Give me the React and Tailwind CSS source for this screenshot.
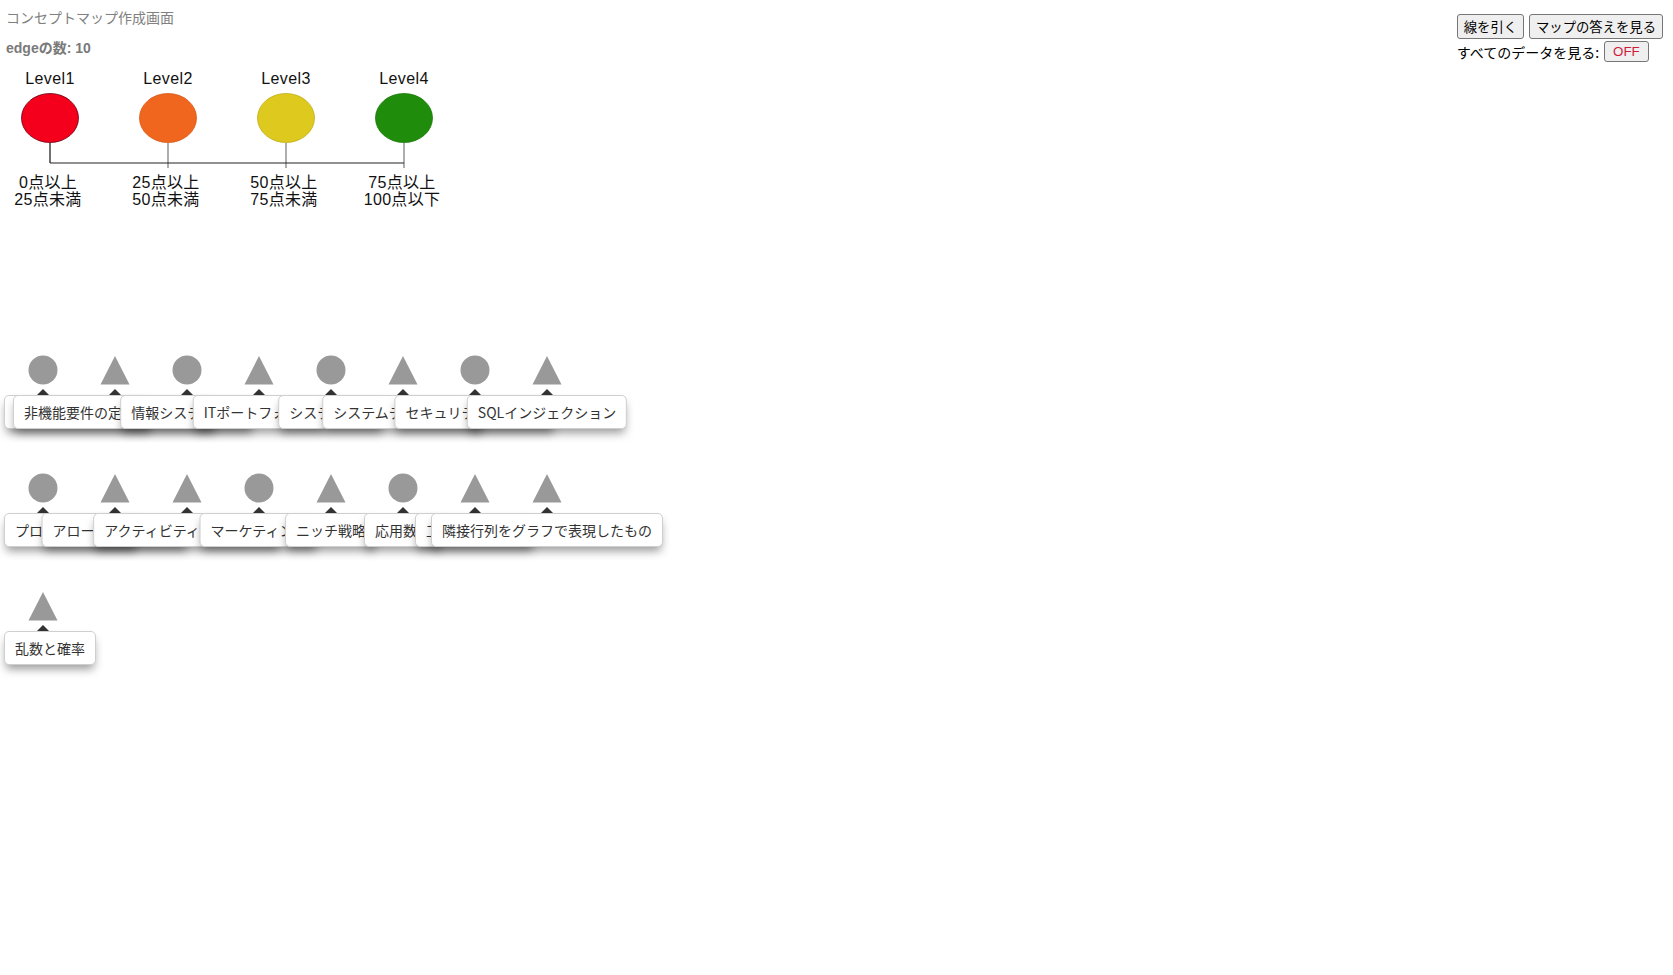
import React from 'react';

const rows = [
    [
        ['circle', 'ネットワーク構成図'],
        ['triangle', '非機能要件の定義と評価基準'],
        ['circle', '情報システム戦略'],
        ['triangle', 'ITポートフォリオ'],
        ['circle', 'システム監査'],
        ['triangle', 'システムテストの種類'],
        ['circle', 'セキュリティ管理体制'],
        ['triangle', 'SQLインジェクション'],
    ],
    [
        ['circle', 'プロジェクト管理'],
        ['triangle', 'アローダイアグラム'],
        ['triangle', 'アクティビティ図の書き方'],
        ['circle', 'マーケティング'],
        ['triangle', 'ニッチ戦略'],
        ['circle', '応用数学'],
        ['triangle', '工数見積り手法'],
        ['triangle', '隣接行列をグラフで表現したもの'],
    ],
    [
        ['triangle', '乱数と確率'],
    ],
];

const levels = [
    { name: 'Level1', x: 50, fill: '#f5001c', stroke: '#6a0010', top: '0点以上', bottom: '25点未満', short: true },
    { name: 'Level2', x: 168, fill: '#f0661e', stroke: '#d65a18', top: '25点以上', bottom: '50点未満' },
    { name: 'Level3', x: 286, fill: '#dec91f', stroke: '#c2ad16', top: '50点以上', bottom: '75点未満' },
    { name: 'Level4', x: 404, fill: '#1f8d0b', stroke: '#1a7a09', top: '75点以上', bottom: '100点以下' },
];

function Legend() {
    return (
        <svg width="450" height="150" className="block">
            {levels.map((l) => (
                <g key={l.name}>
                    <text x={l.x} y="24" textAnchor="middle" fontSize="16" fontFamily="'Liberation Sans', Arial, sans-serif" letterSpacing="0.4" fill="#111">{l.name}</text>
                    <ellipse cx={l.x} cy="58" rx="28.5" ry="24.5" fill={l.fill} stroke={l.stroke} strokeWidth="0.8" />
                    <line x1={l.x} y1="83" x2={l.x} y2={l.short ? 103 : 108} stroke={l.short ? '#111' : '#777'} strokeWidth="1.2" />
                    <text x={l.x - 2} y="128" textAnchor="middle" fontSize="16" letterSpacing="0.3" fontFamily="'Liberation Sans', 'Noto Sans CJK JP', sans-serif" fill="#111">{l.top}</text>
                    <text x={l.x - 2} y="145" textAnchor="middle" fontSize="16" letterSpacing="0.3" fontFamily="'Liberation Sans', 'Noto Sans CJK JP', sans-serif" fill="#111">{l.bottom}</text>
                </g>
            ))}
            <line x1="50" y1="103" x2="404" y2="103" stroke="#222" strokeWidth="1" />
        </svg>
    );
}

function Shape({ shape, x, y }) {
    return (
        <div className="absolute w-[30px] h-[30px]" style={{ left: x - 15, top: y - 15 }}>
            <svg width="30" height="30">
                {shape === 'circle' ? (
                    <circle cx="15" cy="15" r="14.5" fill="#999" />
                ) : (
                    <polygon points="15,1 29.5,29.5 0.5,29.5" fill="#999" />
                )}
            </svg>
        </div>
    );
}

function Label({ text, x, y, first }) {
    return (
        <>
            <div
                className="absolute w-0 h-0 border-x-[6px] border-x-transparent border-b-[6px] border-b-[#333]"
                style={{ left: x - 6, top: y + 19 }}
            />
            <div
                className={`absolute whitespace-nowrap bg-white border border-[#cfcfcf] rounded-[5px] px-[10px] py-[7px] text-[14px] leading-[18px] text-[#333] shadow-[0_6px_10px_-2px_rgba(0,0,0,0.4)] ${first ? '' : '-translate-x-1/2'}`}
                style={{ left: first ? 4 : x, top: y + 25 }}
            >
                {text}
            </div>
        </>
    );
}

export default function App() {
    return (
        <div className="min-h-screen bg-white font-['Liberation_Sans','Noto_Sans_CJK_JP',sans-serif]">
            <div className="flex justify-between h-[220px]">
                <div>
                    <p className="pl-[6px] pt-[7px] text-[14px] leading-[20px] text-[#808080] font-['Noto_Sans_CJK_JP',sans-serif]">コンセプトマップ作成画面</p>
                    <p className="pl-[6px] mt-[11px] text-[14px] leading-[20px] font-bold text-[#7a7a7a]">edgeの数: 10</p>
                    <div className="mt-[2px]">
                        <Legend />
                    </div>
                </div>

                <div className="pt-[14px] pr-[10px] font-['Noto_Sans_CJK_JP',sans-serif] text-black">
                    <div className="flex gap-[5px]">
                        <button className="bg-[#efefef] border border-[#767676] rounded-[3px] px-[6px] py-[2px] text-[13.33px] leading-[19px]">線を引く</button>
                        <button className="bg-[#efefef] border border-[#767676] rounded-[3px] px-[6px] py-[2px] text-[13.33px] leading-[19px]">マップの答えを見る</button>
                    </div>
                    <div className="flex items-center gap-[5px] mt-[2px]">
                        <span className="text-[14px] leading-[20px]">すべてのデータを見る:</span>
                        <button className="bg-[#efefef] border border-[#767676] rounded-[3px] px-[8px] py-[1px] text-[13.33px] leading-[17px] text-[#d21a3c] font-['Liberation_Sans',sans-serif]">OFF</button>
                    </div>
                </div>
            </div>

            <div className="relative h-[755px] font-['Noto_Sans_CJK_JP',sans-serif]">
                {rows.map((row, r) =>
                    row.map(([shape], c) => (
                        <Shape key={`s${r}-${c}`} shape={shape} x={43 + c * 72} y={150 + r * 118} />
                    ))
                )}
                {rows.map((row, r) =>
                    row.map(([, text], c) => (
                        <Label key={`l${r}-${c}`} text={text} x={43 + c * 72} y={150 + r * 118} first={c === 0} />
                    ))
                )}
            </div>
        </div>
    );
}
